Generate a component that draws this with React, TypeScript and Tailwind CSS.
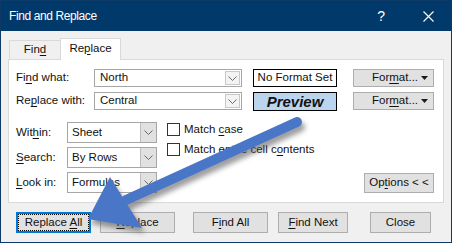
import React from 'react';

const U = ({ children }: { children: React.ReactNode }) => (
  <span className="underline underline-offset-[2px] decoration-[1px]">{children}</span>
);

function Chevron() {
  return (
    <svg width="9" height="5" viewBox="0 0 9 5" aria-hidden="true">
      <path d="M0.5 0.5 L4.5 4.5 L8.5 0.5" fill="none" stroke="#6a6a6a" strokeWidth="1" />
    </svg>
  );
}

function Caret() {
  return (
    <svg width="7" height="4" viewBox="0 0 7 4" aria-hidden="true">
      <path d="M0 0 H7 L3.5 4 Z" fill="#1a1a1a" />
    </svg>
  );
}

function Combo({ value }: { value: string }) {
  return (
    <div className="flex h-[18px] w-[148px] border border-[#a6a6a6] bg-white">
      <div className="flex flex-1 items-center pl-[5px]">{value}</div>
      <div className="m-px flex w-[15px] items-center justify-center border border-[#c8c8c8] bg-[#f3f3f3]">
        <Chevron />
      </div>
    </div>
  );
}

function Select({ value }: { value: string }) {
  return (
    <div className="flex h-[21px] w-[90px] border border-[#a6a6a6] bg-white">
      <div className="flex flex-1 items-center pl-[4px]">{value}</div>
      <div className="flex w-[16px] items-center justify-center border-l border-[#bdbdbd] bg-[#e1e1e1]">
        <Chevron />
      </div>
    </div>
  );
}

function Btn({ w, ml, children, focus }: { w: string; ml: string; children: React.ReactNode; focus?: boolean }) {
  return (
    <div
      className={`${w} ${ml} flex h-[21px] items-center justify-center bg-[#e1e1e1] ${
        focus ? 'border-2 border-[#0078d7]' : 'border border-[#adadad]'
      }`}
    >
      {focus ? (
        <div className="flex h-full w-full items-center justify-center border border-dotted border-black">
          <span>{children}</span>
        </div>
      ) : (
        <span>{children}</span>
      )}
    </div>
  );
}

function FormatBtn() {
  return (
    <div className="ml-[16px] flex h-[18px] w-[81px] items-center border border-[#adadad] bg-[#e1e1e1] pl-[18px]">
      <span>
        For<U>m</U>at...
      </span>
      <div className="flex-1" />
      <span className="mr-[5px] flex">
        <Caret />
      </span>
    </div>
  );
}

function Check({ children }: { children: React.ReactNode }) {
  return (
    <div className="flex h-[13px] items-center">
      <div className="h-[13px] w-[13px] border border-[#333333] bg-white" />
      <span className="ml-[4px]">{children}</span>
    </div>
  );
}

export default function App() {
  return (
    <div
      className="relative h-[243px] w-[452px] overflow-hidden border border-[#0d3a66] bg-[#f0f0f0] text-[11.5px] leading-none text-[#111]"
      style={{ fontFamily: '"Liberation Sans", Arial, sans-serif' }}
    >
      {/* Title bar */}
      <div className="flex h-[30px] items-center bg-[#013a6a] pl-[8px] text-white">
        <span className="text-[12px] tracking-[-0.4px]">Find and Replace</span>
        <div className="flex-1" />
        <span className="text-[14px] font-light">?</span>
        <svg className="ml-[38px] mr-[17px]" width="11" height="11" viewBox="0 0 11 11" aria-hidden="true">
          <path d="M0.5 0.5 L10.5 10.5 M10.5 0.5 L0.5 10.5" stroke="white" strokeWidth="1.1" />
        </svg>
      </div>

      {/* Tabs */}
      <div className="ml-[8px] mt-[7px] flex h-[21px] items-end">
        <div className="flex h-[19px] w-[51px] items-center justify-center border border-b-0 border-r-0 border-[#d9d9d9] bg-[#f0f0f0]">
          <span>
            Fin<U>d</U>
          </span>
        </div>
        <div className="relative z-10 -mb-px flex h-[22px] w-[61px] items-center justify-center border border-b-0 border-[#d9d9d9] bg-white pb-[2px]">
          <span>
            Re<U>p</U>lace
          </span>
        </div>
      </div>

      {/* Panel */}
      <div className="ml-[7px] flex h-[144px] w-[436px] flex-col border border-[#d9d9d9] bg-white pl-[7px] pt-[9px]">
        <div className="flex items-center">
          <div className="w-[78px]">
            Fi<U>n</U>d what:
          </div>
          <Combo value="North" />
          <div className="ml-[11px] flex h-[18px] w-[84px] items-center justify-center border border-black bg-white">
            No Format Set
          </div>
          <FormatBtn />
        </div>

        <div className="mt-[5px] flex items-start">
          <div className="flex h-[18px] w-[78px] items-center">
            <span>
              Re<U>p</U>lace with:
            </span>
          </div>
          <Combo value="Central" />
          <div className="ml-[11px] flex h-[19px] w-[84px] items-center justify-center border border-black bg-[#bcd5ee] text-[15px] font-bold italic">
            Preview
          </div>
          <FormatBtn />
        </div>

        <div className="mt-[11px] flex">
          <div className="flex flex-col gap-[4px]">
            <div className="flex items-center">
              <div className="w-[51px]">
                Wit<U>h</U>in:
              </div>
              <Select value="Sheet" />
            </div>
            <div className="flex items-center">
              <div className="w-[51px]">
                <U>S</U>earch:
              </div>
              <Select value="By Rows" />
            </div>
            <div className="flex items-center">
              <div className="w-[51px]">
                <U>L</U>ook in:
              </div>
              <Select value="Formulas" />
            </div>
          </div>
          <div className="ml-[10px] flex flex-col gap-[7px] pt-[1px]">
            <Check>
              Match <U>c</U>ase
            </Check>
            <Check>
              Match entire cell c<U>o</U>ntents
            </Check>
          </div>
          <div className="flex flex-1 items-end justify-end pr-[9px]">
            <div className="flex h-[20px] w-[70px] items-center justify-center border border-[#adadad] bg-[#e1e1e1]">
              <span>
                Op<U>t</U>ions &lt; &lt;
              </span>
            </div>
          </div>
        </div>
      </div>

      {/* Bottom buttons */}
      <div className="mt-[9px] flex">
        <Btn w="w-[75px]" ml="ml-[15px]" focus>
          Replace <U>A</U>ll
        </Btn>
        <Btn w="w-[75px]" ml="ml-[9px]">
          <U>R</U>eplace
        </Btn>
        <Btn w="w-[75px]" ml="ml-[18px]">
          F<U>i</U>nd All
        </Btn>
        <Btn w="w-[70px]" ml="ml-[10px]">
          <U>F</U>ind Next
        </Btn>
        <Btn w="w-[61px]" ml="ml-[22px]">
          Close
        </Btn>
      </div>

      {/* Annotation arrow */}
      <svg
        className="pointer-events-none absolute left-[-1px] top-[-1px] z-20"
        width="452"
        height="243"
        viewBox="0 0 452 243"
        aria-hidden="true"
      >
        <defs>
          <filter id="blur" x="-20%" y="-20%" width="140%" height="140%">
            <feGaussianBlur stdDeviation="2.5" />
          </filter>
        </defs>
        <g transform="translate(3 5)" filter="url(#blur)" opacity="0.55">
          <line x1="297" y1="122" x2="126" y2="200" stroke="#505050" strokeWidth="10" strokeLinecap="round" />
          <polygon points="88,219 110,177 142,228" fill="#505050" />
        </g>
        <line x1="297" y1="122" x2="126" y2="200" stroke="#4a76c8" strokeWidth="10" strokeLinecap="round" />
        <polygon points="88,219 110,177 142,228" fill="#4a76c8" />
      </svg>
    </div>
  );
}
